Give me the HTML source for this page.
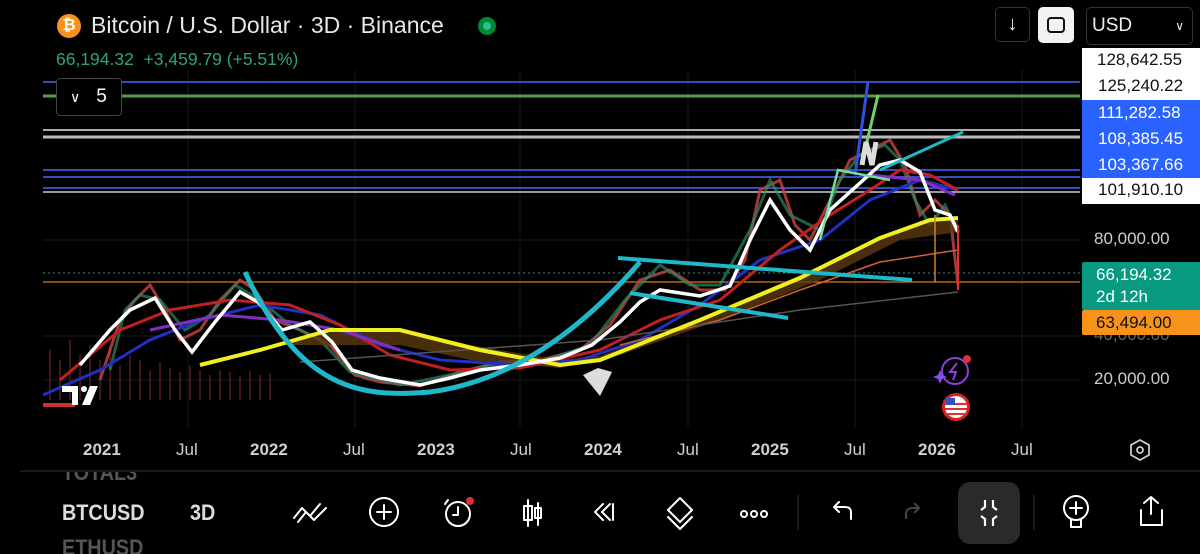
<!DOCTYPE html>
<html><head><meta charset="utf-8"><style>
html,body{margin:0;background:#000;width:1200px;height:554px;overflow:hidden;font-family:"Liberation Sans",Roboto,sans-serif;position:relative}
.a{position:absolute}
.pl{position:absolute;left:1082px;width:131px;height:24px;font-size:17px;line-height:24px;padding-left:16px;box-sizing:border-box;width:131px}
.ax{position:absolute;top:440px;font-size:17px;color:#d0d0d0}
.bl{position:absolute;font-size:22px;font-weight:bold;transform:scaleX(0.9);transform-origin:left}
</style></head><body>
<svg class="a" style="left:0;top:0" width="1200" height="554">
<g stroke="#1a1a1a" stroke-width="1">
<line x1="188" y1="70" x2="188" y2="428"/><line x1="355" y1="70" x2="355" y2="428"/><line x1="520" y1="70" x2="520" y2="428"/><line x1="688" y1="70" x2="688" y2="428"/><line x1="855" y1="70" x2="855" y2="428"/><line x1="1022" y1="70" x2="1022" y2="428"/>
<line x1="43" y1="240" x2="1080" y2="240"/><line x1="43" y1="380" x2="1080" y2="380"/><line x1="43" y1="336" x2="1080" y2="336"/>
</g>
<line x1="43" y1="82" x2="1080" y2="82" stroke="#3a4bc0" stroke-width="2"/>
<line x1="43" y1="96" x2="1080" y2="96" stroke="#5a9a50" stroke-width="3"/>
<line x1="43" y1="130" x2="1080" y2="130" stroke="#aaa" stroke-width="2"/>
<line x1="43" y1="137" x2="1080" y2="137" stroke="#bbb" stroke-width="3"/>
<line x1="43" y1="170" x2="1080" y2="170" stroke="#3a4bc0" stroke-width="2"/>
<line x1="43" y1="177" x2="1080" y2="177" stroke="#3a4bc0" stroke-width="2"/>
<line x1="43" y1="188" x2="1080" y2="188" stroke="#3a4bc0" stroke-width="2"/>
<line x1="43" y1="192" x2="1080" y2="192" stroke="#ccc" stroke-width="1.5"/>
<line x1="43" y1="273" x2="1080" y2="273" stroke="#2a9a80" stroke-width="1" stroke-dasharray="2,3"/>
<line x1="43" y1="282" x2="1080" y2="282" stroke="#d07a20" stroke-width="1.2"/>
<g stroke="#5a2020" stroke-width="2" opacity="0.7">
<path d="M50 400V350M60 400V360M70 400V340M80 400V355M90 400V345M100 400V360M110 400V350M120 400V365M130 400V355M140 400V360M150 400V370M160 400V362M170 400V368M180 400V372M190 400V366M200 400V370M210 400V375M220 400V370M230 400V372M240 400V376M250 400V371M260 400V375M270 400V373"/>
</g>
<path d="M43 405H75" stroke="#d03030" stroke-width="4"/>
<g stroke-width="3" opacity="0.85">
<path d="M100 380L120 320L135 300L150 285L165 310L180 340L200 330L220 300L240 280L255 290L275 320L300 330L330 345L355 375L380 382L420 386L460 372L500 362L540 360L580 350L610 325L640 280L670 270L700 290L725 290L745 260L760 190L780 180L795 225L810 240L830 200L850 160L870 150L890 140L905 165L920 215L935 200L950 215L958 285" stroke="#c04040" fill="none"/>
<path d="M110 370L125 310L140 295L160 300L185 330L210 315L235 285L260 300L290 325L320 340L350 372L400 385L450 375L490 365L540 362L590 345L625 300L660 265L690 285L720 285L750 230L770 180L790 215L820 230L840 180L860 155L885 145L900 160L915 200L930 225L945 205L957 230" stroke="#30a070" fill="none" opacity="0.7"/>
</g>
<path d="M280 345L340 330L400 328L470 345L560 360L600 356L700 318L800 275L880 238L930 222L958 220L958 232L900 240L820 280L720 320L620 355L560 368L470 360L400 345L340 345Z" fill="#5a3a10" opacity="0.8"/>
<path d="M43 395L100 370L150 340L200 320L260 305L320 315L380 345L440 360L520 365L580 360L640 340L700 305L760 260L820 240L870 200L920 180L958 190" stroke="#2030c0" stroke-width="3" fill="none"/>
<path d="M60 380L120 330L170 310L230 300L290 305L340 325L390 355L450 370L520 368L600 350L660 320L720 300L780 250L830 215L870 190L900 170L930 175L958 190" stroke="#c02020" stroke-width="3" fill="none"/>
<path d="M150 330L220 315L280 320L340 330L400 350" stroke="#8030c0" stroke-width="3" fill="none"/>
<path d="M870 175L920 180L955 195" stroke="#8030c0" stroke-width="3" fill="none"/>
<path d="M620 345L720 320L800 290L880 262L958 250" stroke="#d06040" stroke-width="1.5" fill="none"/>
<path d="M300 362L600 340L800 310L958 292" stroke="#555" stroke-width="1.5" fill="none"/>
<path d="M200 365L260 350L330 330L400 330L480 350L560 365L600 360L700 320L800 278L880 238L930 220L958 218" stroke="#f0f020" stroke-width="4" fill="none"/>
<path d="M80 365L110 330L130 310L155 298L175 330L192 352L215 322L240 292L258 302L282 330L310 322L332 342L352 370L380 378L420 385L450 378L480 370L520 365L560 358L592 345L620 322L640 302L660 290L700 296L730 286L750 240L770 200L790 230L810 250L830 210L860 183L880 165L900 160L920 172L935 210L950 215L958 232" stroke="#fff" stroke-width="3.5" fill="none"/>
<path d="M245 272C300 390 360 398 430 392C520 380 590 320 640 262" stroke="#20b8c8" stroke-width="5" fill="none"/>
<path d="M618 258L912 280" stroke="#20b8c8" stroke-width="4"/>
<path d="M630 293L788 318" stroke="#20b8c8" stroke-width="4"/>
<path d="M880 170L963 132" stroke="#20b8c8" stroke-width="3"/>
<path d="M855 175L868 82" stroke="#3050e0" stroke-width="3"/>
<path d="M865 150L878 95" stroke="#70d070" stroke-width="3"/>
<path d="M820 240L838 170L890 180" stroke="#70e0a0" stroke-width="2.5" fill="none"/>
<path d="M862 165L866 142L872 165L876 142" stroke="#ddd" stroke-width="5" fill="none"/>
<path d="M935 215V282" stroke="#d08030" stroke-width="1.5"/>
<path d="M958 225V290" stroke="#e03030" stroke-width="2"/>
<path d="M583 375L598 368L612 372L600 396Z" fill="#ddd"/>
<path d="M62 386H78V405H72V392H62Z M82 405L90 386H98L90 405Z" fill="#fff"/>
<circle cx="84" cy="389" r="3" fill="#fff"/>
<circle cx="955" cy="371" r="13" fill="none" stroke="#9040d0" stroke-width="2"/>
<path d="M957 363L950 372H956L953 380" stroke="#9040d0" stroke-width="2" fill="none"/>
<path d="M940 370L942 375L947 377L942 379L940 384L938 379L933 377L938 375Z" fill="#8050f0"/>
<circle cx="967" cy="359" r="4" fill="#e03030"/>
<circle cx="956" cy="407" r="14" fill="#e02020"/>
<circle cx="956" cy="407" r="11" fill="#fff"/>
<path d="M945 404H967M945 409H967M945 414H967" stroke="#e03030" stroke-width="2"/>
<rect x="946" y="398" width="9" height="7" fill="#3050c0"/>
<line x1="20" y1="471" x2="1200" y2="471" stroke="#333" stroke-width="1"/>
<path d="M1140 440L1149 445V455L1140 460L1131 455V445Z" stroke="#ccc" stroke-width="1.8" fill="none"/>
<circle cx="1140" cy="450" r="3" stroke="#ccc" stroke-width="1.8" fill="none"/>
<g stroke="#fff" stroke-width="2" fill="none" stroke-linecap="round" stroke-linejoin="round">
<path d="M294 518L302 508L310 516L320 504M298 522L306 512L314 520L326 508"/>
<circle cx="384" cy="512" r="14"/><path d="M384 505V519M377 512H391"/>
<circle cx="458" cy="514" r="12"/><path d="M458 507V515H453M448 500L445 504"/>
<path d="M528 500V526M528 506h-4v14h8v-14zM538 503V525M538 508h-3v10h6v-10z"/>
<path d="M603 504L595 512L603 520M610 504L602 512L610 520M613 504V520"/>
<path d="M680 498L692 510L680 522L668 510Z M668 517L680 529L692 517"/>
<circle cx="744" cy="514" r="3"/><circle cx="754" cy="514" r="3"/><circle cx="764" cy="514" r="3"/>
<path d="M851 519V512Q851 507 845 507H834M839 502L834 507L839 512"/>
<circle cx="1076" cy="508" r="12"/><path d="M1076 502V514M1070 508H1082M1071 520V527H1081V520"/>
<path d="M1141 510V525H1162V510M1151 514V497M1144 503L1151 497L1158 503"/>
</g>
<circle cx="470" cy="501" r="4" fill="#e03030"/>
<path d="M906 519V514Q906 508 913 508H919M914 503L919 508L914 513" stroke="#444" stroke-width="2" fill="none"/>
<line x1="798" y1="495" x2="798" y2="530" stroke="#333"/><line x1="1034" y1="495" x2="1034" y2="530" stroke="#333"/>
</svg>
<div class="a" style="left:958px;top:482px;width:62px;height:62px;border-radius:12px;background:#2a2a2a"></div>
<svg class="a" style="left:958px;top:482px" width="62" height="62"><g stroke="#fff" stroke-width="2.2" fill="none"><path d="M27 18V25L23 28M35 18V25L39 28M27 44V37L23 34M35 44V37L39 34"/></g></svg>
<div class="a" style="left:57px;top:14px;width:24px;height:24px;border-radius:50%;background:#f7931a;color:#fff;font-weight:bold;font-size:16px;text-align:center;line-height:24px">₿</div>
<div class="a" style="left:91px;top:12px;font-size:23px;color:#e8e8e8">Bitcoin / U.S. Dollar · 3D · Binance</div>
<div class="a" style="left:478px;top:17px;width:18px;height:18px;border-radius:50%;background:#083"><div style="margin:5px;width:8px;height:8px;border-radius:50%;background:#2cc090"></div></div>
<div class="a" style="left:56px;top:49px;font-size:17.5px;color:#2ba383">66,194.32&nbsp; +3,459.79 (+5.51%)</div>
<div class="a" style="left:56px;top:78px;width:66px;height:38px;border:1px solid #444;border-radius:4px;background:#000;box-sizing:border-box;color:#fff;font-size:19px;line-height:36px"><span style="margin-left:13px;font-size:14px">&#8744;</span><span style="margin-left:16px">5</span></div>
<div class="a" style="left:995px;top:7px;width:35px;height:35px;border:1px solid #333;border-radius:5px;color:#eee;font-size:20px;text-align:center;line-height:33px;box-sizing:border-box">↓</div>
<div class="a" style="left:1038px;top:7px;width:36px;height:36px;background:#f2f2f2;border-radius:5px"><div style="margin:10px 9px;width:14px;height:12px;border:2px solid #111;border-radius:4px"></div></div>
<div class="a" style="left:1086px;top:7px;width:107px;height:38px;border:1px solid #333;border-radius:5px;box-sizing:border-box;color:#eee;font-size:19px;line-height:36px;padding-left:5px">USD<span style="float:right;margin-right:8px;font-size:12px">&#8744;</span></div>
<div class="pl" style="top:48px;height:26px;background:#fff;color:#111;width:131px;left:1082px;padding-left:15px">128,642.55</div>
<div class="pl" style="top:74px;height:26px;background:#fff;color:#111">125,240.22</div>
<div class="pl" style="top:100px;height:78px;background:#2962ff;color:#fff;line-height:26px">111,282.58<br>108,385.45<br>103,367.66</div>
<div class="pl" style="top:178px;height:26px;background:#fff;color:#111">101,910.10</div>
<div class="a" style="left:1094px;top:229px;font-size:17px;color:#ccc">80,000.00</div>
<div class="a" style="left:1094px;top:369px;font-size:17px;color:#ccc">20,000.00</div>
<div class="a" style="left:1094px;top:325px;font-size:17px;color:#666">40,000.00</div>
<div class="a" style="left:1082px;top:262px;width:121px;height:48px;background:#089981;color:#fff;font-size:17px;line-height:22px;padding:2px 0 0 14px;box-sizing:border-box;border-radius:2px">66,194.32<br>2d 12h</div>
<div class="a" style="left:1082px;top:310px;width:121px;height:25px;background:#f7931a;color:#111;font-size:17px;line-height:25px;padding-left:14px;box-sizing:border-box;border-radius:2px">63,494.00</div>
<div class="ax" style="left:83px;font-weight:bold">2021</div>
<div class="ax" style="left:176px">Jul</div>
<div class="ax" style="left:250px;font-weight:bold">2022</div>
<div class="ax" style="left:343px">Jul</div>
<div class="ax" style="left:417px;font-weight:bold">2023</div>
<div class="ax" style="left:510px">Jul</div>
<div class="ax" style="left:584px;font-weight:bold">2024</div>
<div class="ax" style="left:677px">Jul</div>
<div class="ax" style="left:751px;font-weight:bold">2025</div>
<div class="ax" style="left:844px">Jul</div>
<div class="ax" style="left:918px;font-weight:bold">2026</div>
<div class="ax" style="left:1011px">Jul</div>
<div class="bl" style="left:62px;top:460px;color:#555;clip-path:inset(12px 0 0 0)">TOTAL3</div>
<div class="bl" style="left:62px;top:500px;color:#ddd">BTCUSD</div>
<div class="bl" style="left:190px;top:500px;color:#ddd">3D</div>
<div class="bl" style="left:62px;top:535px;color:#555">ETHUSD</div>
</body></html>
